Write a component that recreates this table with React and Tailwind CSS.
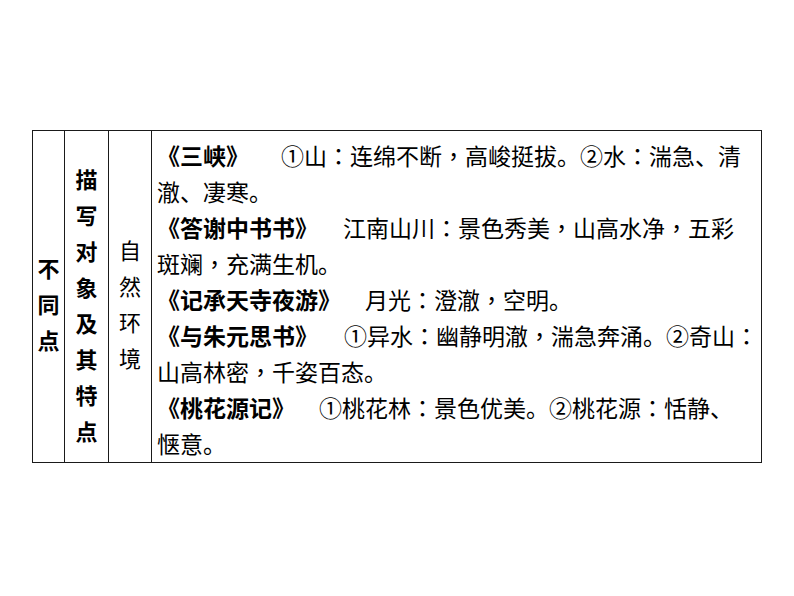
const lines = [
  { title: "《三峡》", gap: "ml-[32px]", text: "①山：连绵不断，高峻挺拔。②水：湍急、清" },
  { text: "澈、凄寒。" },
  { title: "《答谢中书书》", gap: "ml-[25px]", text: "江南山川：景色秀美，山高水净，五彩" },
  { text: "斑斓，充满生机。" },
  { title: "《记承天寺夜游》", gap: "ml-[24px]", text: "月光：澄澈，空明。" },
  { title: "《与朱元思书》", gap: "ml-[26px]", text: "①异水：幽静明澈，湍急奔涌。②奇山：" },
  { text: "山高林密，千姿百态。" },
  { title: "《桃花源记》", gap: "ml-[24px]", text: "①桃花林：景色优美。②桃花源：恬静、" },
  { text: "惬意。" },
];

// commas and colons sit centred in the original, as in the TC glyphs
const Punct = ({ text }) =>
  text.split(/([，：])/).map((part, i) =>
    part === "，" || part === "：" ? (
      <span key={i} style={{ fontFamily: '"Noto Sans CJK TC", sans-serif' }}>{part}</span>
    ) : (
      <span key={i}>{part}</span>
    )
  );

const VerticalCell = ({ chars, className }) => (
  <div className={`flex flex-col items-center justify-center ${className}`}>
    {chars.split("").map((c, i) => (
      <span key={i} className="leading-[36px]">{c}</span>
    ))}
  </div>
);

export default function App() {
  return (
    <div
      className="w-[794px] h-[596px] bg-white text-black pt-[130px] pl-[32px]"
      style={{ fontFamily: '"Noto Sans CJK SC", "Noto Sans", sans-serif' }}
    >
      <div className="flex w-[730px] h-[333px] border border-[#1a1a1a]">
        <VerticalCell
          chars="不同点"
          className="w-[32px] border-r border-[#1a1a1a] text-[22px] font-bold pt-[12px]"
        />
        <VerticalCell
          chars="描写对象及其特点"
          className="w-[44px] border-r border-[#1a1a1a] text-[22px] font-bold pt-[14px]"
        />
        <VerticalCell
          chars="自然环境"
          className="w-[43px] border-r border-[#1a1a1a] text-[22px] pt-[12px]"
        />
        <div className="flex-1 pl-[5px] pt-[6px] text-[23px]">
          {lines.map((l, i) => (
            <div key={i} className="h-[36px] leading-[36px] whitespace-nowrap">
              {l.title && <span className="font-bold">{l.title}</span>}
              <span className={l.gap}><Punct text={l.text} /></span>
            </div>
          ))}
        </div>
      </div>
    </div>
  );
}
